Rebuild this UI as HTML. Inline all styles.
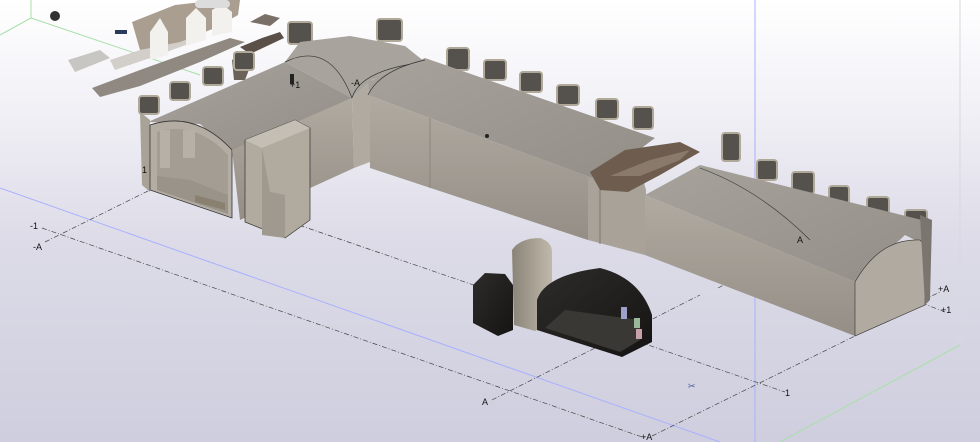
<!DOCTYPE html>
<html><head><meta charset="utf-8"><style>
html,body{margin:0;padding:0;}
body{width:980px;height:442px;overflow:hidden;background:linear-gradient(180deg,#ffffff 0%,#f1f0f6 25%,#dcdbe7 55%,#cfcede 100%);font-family:"Liberation Sans",sans-serif;}
svg{position:absolute;left:0;top:0;}
text{font-family:"Liberation Sans",sans-serif;font-size:9px;fill:#111;}
</style></head><body>
<svg width="980" height="442" viewBox="0 0 980 442">
<defs>
<linearGradient id="roof" x1="0" y1="0" x2="1" y2="1"><stop offset="0" stop-color="#a7a29b"/><stop offset="1" stop-color="#938e87"/></linearGradient>
<linearGradient id="side" x1="0" y1="0" x2="0" y2="1"><stop offset="0" stop-color="#b0aaa1"/><stop offset="1" stop-color="#948e86"/></linearGradient>
<linearGradient id="dark" x1="0" y1="0" x2="1" y2="1"><stop offset="0" stop-color="#2e2c2a"/><stop offset="1" stop-color="#151413"/></linearGradient>
<linearGradient id="tall" x1="0" y1="0" x2="1" y2="0"><stop offset="0" stop-color="#8a8478"/><stop offset="1" stop-color="#c0b9ab"/></linearGradient>
</defs>
<g fill="none" stroke-width="1">
<line x1="31" y1="0" x2="31" y2="18" stroke="#a8e0a8"/>
<line x1="31" y1="18" x2="0" y2="35" stroke="#a8e0a8"/>
<line x1="31" y1="18" x2="200" y2="75" stroke="#a8e0a8"/>
<line x1="960" y1="0" x2="960" y2="345" stroke="#d8d8e0"/>
<line x1="960" y1="345" x2="780" y2="442" stroke="#a8e0a8"/>
<line x1="755" y1="0" x2="755" y2="442" stroke="#aab0ff"/>
<line x1="0" y1="188" x2="720" y2="442" stroke="#aab0ff"/>
</g>
<g fill="none" stroke="#444" stroke-width="0.7" stroke-dasharray="5,2,1,2">
<line x1="42" y1="228" x2="645" y2="438"/>
<line x1="290" y1="222" x2="785" y2="392"/>
<line x1="45" y1="242" x2="150" y2="190"/>
<line x1="492" y1="400" x2="700" y2="295"/>
<line x1="718" y1="288" x2="790" y2="250"/>
<line x1="652" y1="436" x2="855" y2="336"/>
<line x1="860" y1="330" x2="940" y2="292"/>
<line x1="922" y1="303" x2="945" y2="312"/>
</g>
<!-- point cloud -->
<g>
<polygon points="68,60 100,50 110,58 75,72" fill="#c8c6c2"/>
<polygon points="92,88 140,70 190,52 230,38 245,42 200,62 140,86 100,97" fill="#8f8982"/>
<polygon points="110,60 170,40 200,30 205,38 150,58 115,70" fill="#d2cfca"/>
<polygon points="132,22 175,5 220,0 240,0 238,15 215,28 180,42 140,50" fill="#a99e90"/>
<polygon points="150,32 160,18 168,32 168,55 150,60" fill="#f2f1ee"/>
<polygon points="186,18 196,8 206,18 206,40 186,46" fill="#f2f1ee"/>
<polygon points="212,10 222,4 232,12 232,32 212,36" fill="#f2f1ee"/>
<rect x="195" y="0" width="35" height="8" rx="4" fill="#dcdcdc"/>
<ellipse cx="55" cy="16" rx="5" ry="5" fill="#333"/>
<polygon points="232,60 245,52 252,62 245,80 234,80" fill="#6b625a"/>
<circle cx="242" cy="62" r="7" fill="none" stroke="#e020e0" stroke-width="1" stroke-dasharray="2,1"/>
<rect x="115" y="30" width="12" height="4" fill="#2a3a5a"/>
<polygon points="240,47 262,38 280,32 284,38 250,54" fill="#5a5048"/>
<polygon points="250,22 265,14 280,18 270,26" fill="#7a7068"/>
</g>
<!-- dormers -->
<g fill="#55524e" stroke="#b0a898" stroke-width="2">
<rect x="139" y="96" width="20" height="18" rx="3"/>
<rect x="170" y="82" width="20" height="18" rx="3"/>
<rect x="203" y="67" width="20" height="18" rx="3"/>
<rect x="234" y="52" width="20" height="18" rx="3"/>
<rect x="288" y="22" width="24" height="22" rx="3"/>
<rect x="377" y="19" width="25" height="22" rx="3"/>
<rect x="447" y="48" width="22" height="22" rx="3"/>
<rect x="484" y="60" width="22" height="20" rx="3"/>
<rect x="520" y="72" width="22" height="20" rx="3"/>
<rect x="557" y="85" width="22" height="20" rx="3"/>
<rect x="596" y="99" width="22" height="20" rx="3"/>
<rect x="633" y="107" width="20" height="22" rx="3"/>
<rect x="722" y="133" width="18" height="28" rx="3"/>
<rect x="757" y="160" width="20" height="20" rx="3"/>
<rect x="792" y="172" width="22" height="22" rx="3"/>
<rect x="829" y="186" width="20" height="22" rx="3"/>
<rect x="867" y="197" width="22" height="22" rx="3"/>
<rect x="905" y="210" width="22" height="22" rx="3"/>
</g>
<!-- left wing -->
<polygon points="140,112 150,120 150,192 142,185" fill="#a8a297"/>
<polygon points="148,122 285,62 352,98 232,152 200,124" fill="url(#roof)"/>
<path d="M150,125 Q195,110 232,150 L232,218 L150,190 Z" fill="#b3ada3" stroke="#333" stroke-width="0.8"/>
<path d="M157,132 Q195,120 228,155 L228,214 L157,190 Z" fill="#a39d94"/>
<polygon points="157,190 228,214 228,195 190,180 157,176" fill="#99938a"/>
<rect x="160" y="130" width="10" height="38" fill="#b6b0a6"/>
<rect x="183" y="130" width="12" height="28" fill="#b6b0a6"/>
<polygon points="195,195 225,203 225,210 195,202" fill="#8a8070"/>
<polygon points="232,150 352,98 354,168 240,220" fill="url(#side)"/>
<polygon points="245,140 295,120 310,128 310,220 285,238 245,222" fill="#b0aa9f" stroke="#333" stroke-width="0.7"/>
<polygon points="245,140 295,120 310,128 262,148" fill="#c4beb4"/>
<polygon points="262,148 262,235 285,238 285,195 270,192" fill="#9f998f"/>
<!-- junction -->
<polygon points="285,62 300,42 350,36 405,46 425,62 372,80 352,98" fill="#a8a39c"/>
<path d="M285,62 Q330,40 352,98 Q360,70 425,62" fill="none" stroke="#333" stroke-width="0.7"/>
<polygon points="352,98 372,80 370,162 354,168" fill="#b0aaa1"/>
<!-- long wing -->
<polygon points="368,82 425,58 655,138 628,158 592,178 370,96" fill="url(#roof)"/>
<path d="M368,95 Q380,70 425,60" fill="none" stroke="#333" stroke-width="0.7"/>
<polygon points="370,96 592,178 588,240 370,168" fill="url(#side)"/>
<line x1="430" y1="118" x2="430" y2="188" stroke="#8c867e"/>
<polygon points="588,178 640,168 646,190 645,255 588,240" fill="#a8a299"/>
<line x1="600" y1="180" x2="600" y2="244" stroke="#7a756e"/>
<polygon points="590,172 625,150 680,142 700,152 660,175 628,192 600,190" fill="#6e5c4e"/>
<polygon points="610,176 650,160 690,150 680,160 640,176" fill="#8a7a6c"/>
<!-- right wing -->
<polygon points="645,195 700,165 930,222 925,245 905,235 855,282" fill="url(#roof)"/>
<path d="M700,168 Q760,190 810,240" fill="none" stroke="#333" stroke-width="0.6"/>
<polygon points="645,195 855,282 855,336 645,255" fill="url(#side)"/>
<path d="M855,282 Q880,238 920,240 L925,245 L925,305 L855,336 Z" fill="#b0aaa0" stroke="#333" stroke-width="0.6"/>
<polygon points="920,215 932,220 930,300 925,305" fill="#7a766f"/>
<!-- dark object -->
<polygon points="473,285 485,273 505,274 513,285 513,330 498,336 473,323" fill="url(#dark)"/>
<path d="M512,250 Q520,238 540,238 Q552,242 552,252 L552,322 L535,331 L514,325 Z" fill="url(#tall)"/>
<path d="M537,300 Q545,275 600,268 Q640,278 652,315 L652,342 L622,357 L537,330 Z" fill="url(#dark)"/>
<polygon points="545,328 620,352 640,340 640,320 565,310" fill="#3a3834"/>
<rect x="621" y="307" width="6" height="12" fill="#9da0c8"/>
<rect x="634" y="318" width="6" height="10" fill="#9ab89a"/>
<rect x="636" y="329" width="6" height="10" fill="#c8a0a8"/>
<!-- labels -->
<text x="290" y="88">+1</text>
<text x="351" y="86">-A</text>
<text x="142" y="173">1</text>
<text x="30" y="229">-1</text>
<text x="33" y="250">-A</text>
<text x="797" y="243">A</text>
<text x="938" y="292">+A</text>
<text x="941" y="313">+1</text>
<text x="482" y="405">A</text>
<text x="785" y="396">1</text>
<text x="641" y="440">+A</text>
<text x="688" y="389" style="fill:#4a5a9a">✂</text>
<rect x="290" y="74" width="4" height="10" fill="#222"/>
<circle cx="487" cy="136" r="2" fill="#222"/>
</svg>
</body></html>
